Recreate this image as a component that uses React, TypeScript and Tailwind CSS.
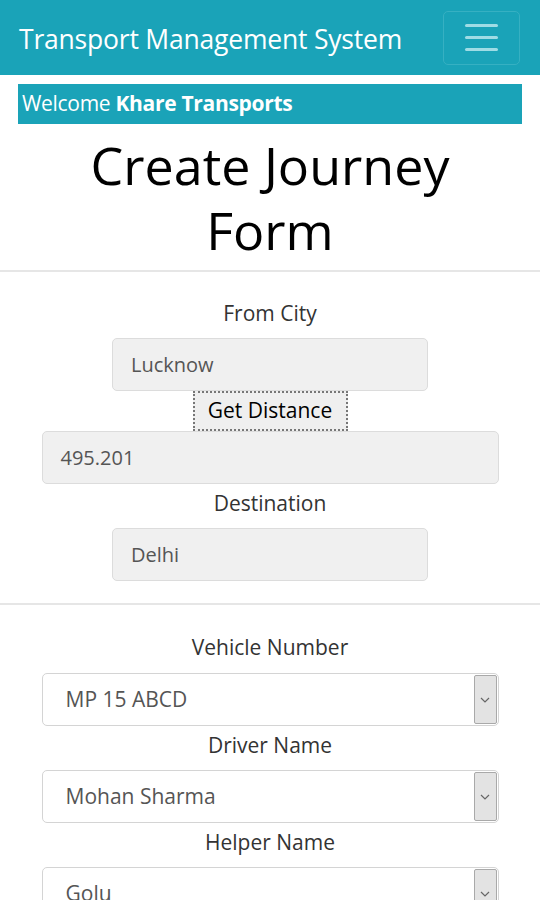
import React from 'react';

const font = { fontFamily: '"Open Sans", "Noto Sans", sans-serif' };

function Label({ children }: { children: React.ReactNode }) {
  return <div className="text-center text-[21px] leading-[26px] text-[#333]">{children}</div>;
}

function Field({ value, wide }: { value: string; wide?: boolean }) {
  return (
    <div
      className={`h-[53px] ${wide ? 'w-[457px]' : 'w-[316px]'} mx-auto flex items-center px-[18px] bg-[#f0f0f0] border border-[#dcdcdc] rounded-[5px] text-[20px] text-[#555]`}
    >
      {value}
    </div>
  );
}

function Select({ value }: { value: string }) {
  return (
    <div className="h-[53px] w-[457px] mx-auto flex items-stretch bg-white border border-[#d4d4d4] rounded-[5px] text-[21px] text-[#555]">
      <div className="flex-1 flex items-center pl-[23px]">{value}</div>
      <div className="w-[23px] my-[1px] mr-[1px] flex items-center justify-center bg-[#e3e3e3] border border-[#a9a9a9] rounded-[2px]">
        <svg width="10" height="6" viewBox="0 0 10 6" fill="none">
          <path d="M1 1l4 4 4-4" stroke="#666" strokeWidth="1.2" />
        </svg>
      </div>
    </div>
  );
}

export default function App() {
  return (
    <div className="w-[540px] h-[900px] overflow-hidden bg-white" style={font}>
      <nav className="h-[75px] bg-[#1aa3b8] flex items-center justify-between pl-[19px] pr-[20px]">
        <span className="text-white text-[26.5px] tracking-[-0.2px] pt-[4px]">Transport Management System</span>
        <button className="w-[77px] h-[54px] border border-[#36b0c2] rounded-[5px] flex flex-col items-center justify-center gap-[9px]">
          <span className="block w-[33px] h-[3px] bg-[#9fdce5] rounded-sm" />
          <span className="block w-[33px] h-[3px] bg-[#9fdce5] rounded-sm" />
          <span className="block w-[33px] h-[3px] bg-[#9fdce5] rounded-sm" />
        </button>
      </nav>

      <div className="mx-[18px] mt-[9px] h-[40px] bg-[#1aa3b8] flex items-center pl-[4px] text-white text-[21px] tracking-[-0.3px]">
        Welcome&nbsp;<b>Khare Transports</b>
      </div>

      <h1 className="text-center text-[52px] leading-[65px] text-black mt-[8px] px-[60px]">Create Journey Form</h1>

      <hr className="mt-[8px] border-t-2 border-[#e6e6e6]" />

      <div className="pt-[28px]">
        <Label>From City</Label>
        <div className="mt-[12px]">
          <Field value="Lucknow" />
        </div>
        <div className="flex justify-center">
          <button className="h-[40px] w-[155px] bg-[#efefef] border-2 border-dotted border-[#777] text-[21px] text-black">
            Get Distance
          </button>
        </div>
        <Field value="495.201" wide />
        <div className="mt-[6px]">
          <Label>Destination</Label>
        </div>
        <div className="mt-[12px]">
          <Field value="Delhi" />
        </div>
      </div>

      <hr className="mt-[22px] border-t-2 border-[#e6e6e6]" />

      <div className="pt-[29px]">
        <Label>Vehicle Number</Label>
        <div className="mt-[13px]">
          <Select value="MP 15 ABCD" />
        </div>
        <div className="mt-[6px]">
          <Label>Driver Name</Label>
        </div>
        <div className="mt-[12px]">
          <Select value="Mohan Sharma" />
        </div>
        <div className="mt-[6px]">
          <Label>Helper Name</Label>
        </div>
        <div className="mt-[12px]">
          <Select value="Golu" />
        </div>
      </div>
    </div>
  );
}
